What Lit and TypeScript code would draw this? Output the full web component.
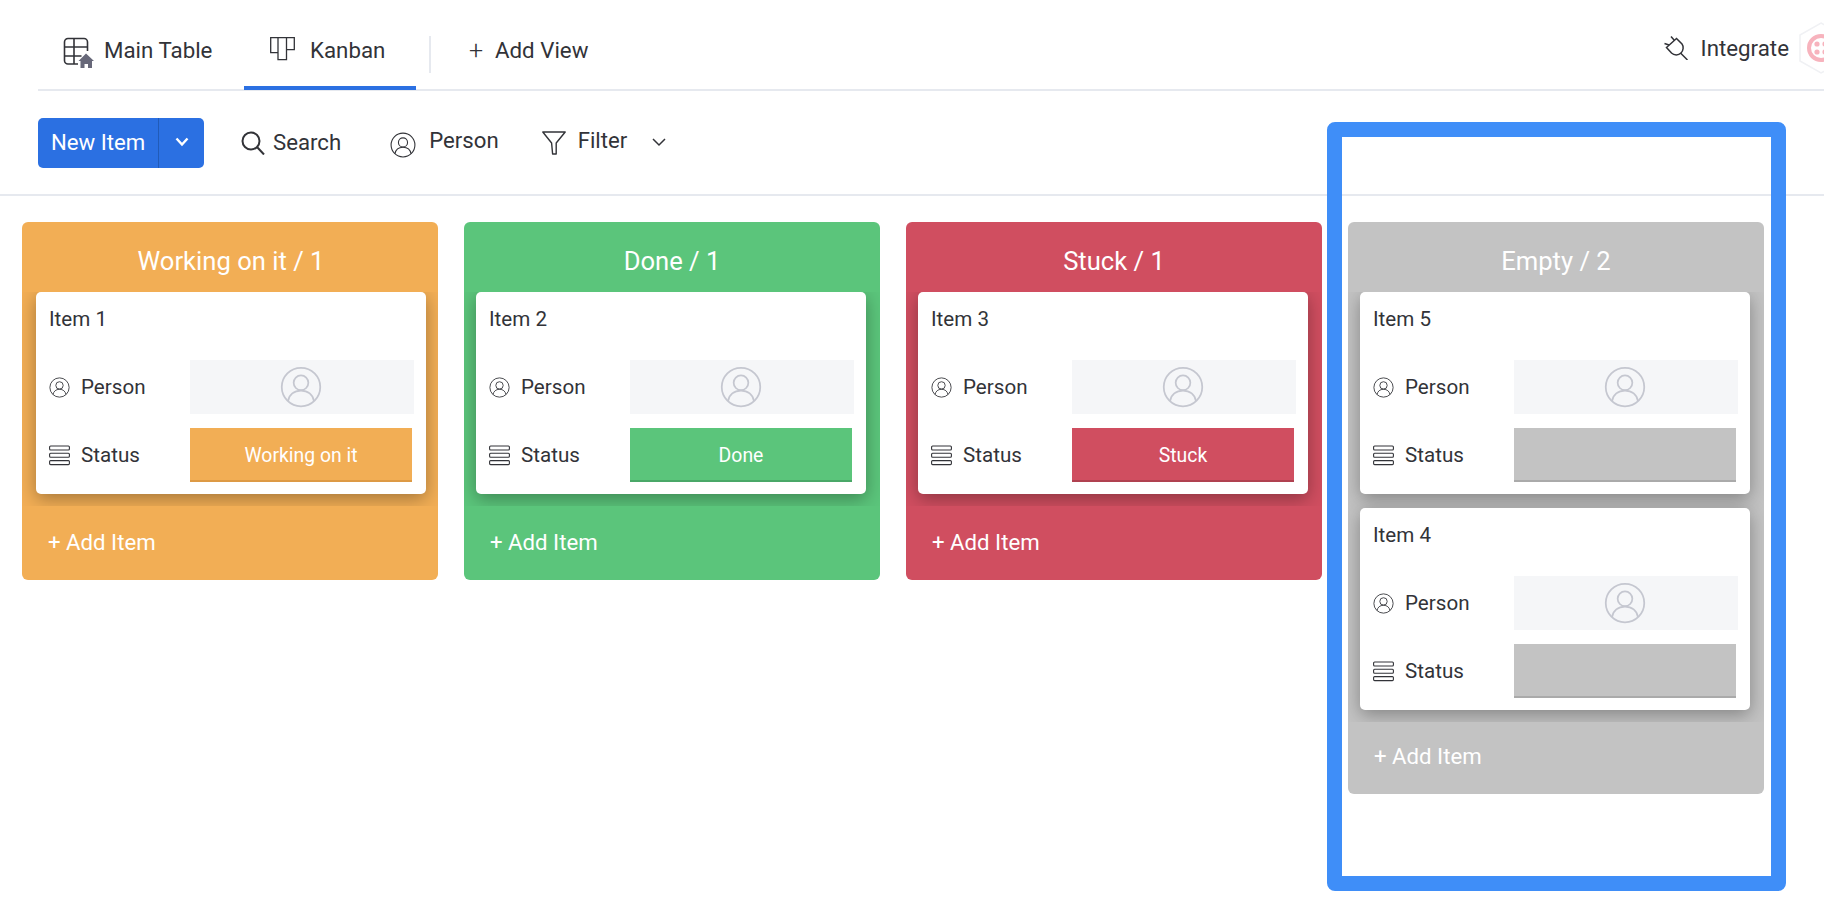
import { LitElement, html, css } from "lit";
import { customElement } from "lit/decorators.js";

const personIcon = (cls: string) => html`<svg class=${cls} viewBox="0 0 24 24" fill="none" stroke="currentColor" stroke-width="1">
  <circle cx="12" cy="12" r="11"/><circle cx="12" cy="9.6" r="4.2"/>
  <path d="M4.6 20c.6-3.6 3.4-6 7.4-6s6.8 2.4 7.4 6"/></svg>`;

const statusIcon = html`<svg class="ic" viewBox="0 0 21 21" fill="none" stroke="currentColor" stroke-width="1.1">
  <rect x=".6" y="1" width="19.8" height="4" rx="1"/><rect x="0.6" y="8.2" width="19.8" height="4" rx="1"/><rect x="0.6" y="15.6" width="19.8" height="4" rx="1"/></svg>`;

const columns = [
  { title: "Working on it / 1", color: "#f2ae55", dark: "#dd9a45", cls: "first", items: [{ name: "Item 1", status: "Working on it" }] },
  { title: "Done / 1", color: "#5bc57b", dark: "#4aa868", cls: "", items: [{ name: "Item 2", status: "Done" }] },
  { title: "Stuck / 1", color: "#d04e60", dark: "#b04150", cls: "", items: [{ name: "Item 3", status: "Stuck" }] },
  { title: "Empty / 2", color: "#c3c3c3", dark: "#aaaaaa", cls: "last", items: [{ name: "Item 5", status: "" }, { name: "Item 4", status: "" }] },
];

@customElement("app-root")
export class AppRoot extends LitElement {
  static styles = css`
    :host { display: block; position: relative; width: 1824px; height: 908px; overflow: hidden; background: #fff;
      font-family: Roboto, "Liberation Sans", sans-serif; color: #323338; }
    .tabs { display: flex; align-items: flex-start; height: 89px; margin-left: 38px; border-bottom: 2px solid #e6e9ef; }
    .tab { display: flex; align-items: center; font-size: 22.3px; padding-top: 10px; box-sizing: border-box; height: 90px; }
    .main { margin-left: 25px; width: 181px; gap: 10px; }
    .main svg { margin-top: 5px; }
    .kanban { width: 172px; padding-left: 26px; padding-top: 14px; gap: 15px; border-bottom: 4px solid #2b70e2; }
    .kanban svg { margin-top: -3px; }
    .sep { width: 2px; height: 37px; background: #e6e9ef; margin: 36px 0 0 13px; }
    .add { margin-left: 38px; gap: 12px; }
    .plus { font-size: 25px; font-weight: 300; width: 14px; display: flex; justify-content: center; line-height: 1; }
    .integrate { margin-left: auto; gap: 13px; padding-top: 6px; }
    .hex { margin-left: -3px; width: 44px; display: flex; align-items: center; margin-right: -19px; }
    .toolbar { display: flex; align-items: center; height: 105px; padding: 1px 0 0 38px; border-bottom: 2px solid #e6e9ef; box-sizing: border-box; font-size: 22.2px; }
    .btn { display: flex; align-items: stretch; height: 50px; width: 166px; background: #2b70e2; color: #fff; border-radius: 5px; }
    .btn-text { border-right: 1px solid #215bb8; display: flex; align-items: center; padding: 0 0 2px 13px; width: 107px; }
    .btn-arrow { flex: 1; display: flex; align-items: center; justify-content: center; padding-bottom: 2px; }
    .search { display: flex; align-items: center; gap: 8px; margin-left: 37px; }
    .search span { margin-top: -2px; }
    .person { display: flex; align-items: center; gap: 13px; margin-left: 49px; }
    .person span { margin-top: -6px; }
    .person svg { width: 26px; height: 26px; margin-top: 3px; }
    .filter { display: flex; align-items: center; gap: 12px; margin-left: 43px; }
    .filter span { margin-top: -6px; }
    .chev { margin-left: 13px; margin-top: -2px; }
    .board { display: flex; align-items: flex-start; gap: 26px; padding: 26px 0 0 22px; }
    .col { width: 416px; border-radius: 6px; color: #fff; padding: 0 12px; box-sizing: border-box; }
    .col.first { padding-left: 14px; }
    .col-title { height: 70px; display: flex; align-items: center; justify-content: center; font-size: 25.6px; padding-top: 8px; box-sizing: border-box; }
    .cards { display: flex; flex-direction: column; gap: 14px; margin: 0 -12px; padding: 0 12px 12px; overflow: hidden; }
    .col.first .cards { margin-left: -14px; padding-left: 14px; }
    .card { flex: none; width: 390px; height: 202px; background: #fff; color: #323338; border-radius: 5px; box-shadow: 0 5px 18px rgba(0,0,0,.32); padding: 15px 12px 12px 13px; box-sizing: border-box; font-size: 20.6px; display: flex; flex-direction: column; }
    .name { height: 24px; line-height: 24px; margin-bottom: 29px; }
    .row { display: grid; grid-template-columns: 141px 1fr; align-items: center; height: 54px; }
    .row + .row { margin-top: 14px; }
    .label { display: flex; align-items: center; gap: 11px; }
    .ic { width: 21px; height: 21px; flex: none; color: #323338; }
    .pbox { height: 54px; background: #f5f6f8; display: flex; align-items: center; justify-content: center; color: #c5c7d0; }
    .pbig { width: 42px; height: 42px; margin-right: 2px; }
    .sbox { height: 54px; width: 222px; box-sizing: border-box; color: #fff; display: flex; align-items: center; justify-content: center; border-bottom: 2px solid; padding-top: 3px; font-size: 19.4px; }
    .add-item { height: 74px; display: flex; align-items: center; font-size: 22.2px; padding: 0 0 2px 14px; box-sizing: border-box; }
    .col.first .add-item { margin-left: -2px; }
    .col.last .add-item { height: 72px; padding-bottom: 4px; }
    .frame { position: absolute; left: 1327px; top: 122px; width: 459px; height: 769px; box-sizing: border-box; border: 15px solid #3f8ef8; border-radius: 8px; pointer-events: none; }
  `;

  renderCol(c: any) {
    return html`<section class="col ${c.cls}" style="background:${c.color}">
      <div class="col-title">${c.title}</div>
      <div class="cards">
        ${c.items.map((it: any) => html`<div class="card">
          <div class="name">${it.name}</div>
          <div class="row"><div class="label">${personIcon("ic")}<span>Person</span></div>
            <div class="pbox">${personIcon("pbig")}</div></div>
          <div class="row"><div class="label">${statusIcon}<span>Status</span></div>
            <div class="sbox" style="background:${c.color};border-color:${c.dark}">${it.status}</div></div>
        </div>`)}
      </div>
      <div class="add-item">+ Add Item</div>
    </section>`;
  }

  render() {
    return html`
      <div class="tabs">
        <div class="tab main">
          <svg width="31" height="31" viewBox="0 0 31 31" fill="none" stroke="#323338" stroke-width="1.6">
            <path d="M15 27H5a3.5 3.5 0 0 1-3.5-3.5V5A3.5 3.5 0 0 1 5 1.5h16A3.5 3.5 0 0 1 24.5 5v9"/>
            <path d="M1.5 10h23M1.5 19h17M11 1.5V27"/>
            <path d="M23 16.5l8 7.500h-2v7h-4v-4h-3.500v4h-4v-7h-2z" fill="#676879" stroke="none"/>
          </svg>
          <span>Main Table</span>
        </div>
        <div class="tab kanban">
          <svg width="25" height="24" viewBox="0 0 25 24" fill="none" stroke="#323338" stroke-width="1.3">
            <path d="M.7 .7h7.300v15H.7zM8 .7h8.500v22H8zM16.500 .7h7.800v12h-7.800z"/>
          </svg>
          <span>Kanban</span>
        </div>
        <div class="sep"></div>
        <div class="tab add"><span class="plus">+</span><span>Add View</span></div>
        <div class="tab integrate">
          <svg width="24" height="24" viewBox="0 0 24 24" fill="none" stroke="#323338" stroke-width="1.5">
            <path d="M12.500 2.500L2.500 11.500L7.500 17C10 19.500 14.500 19.500 17 17C19.500 14.500 19.800 10.500 18 8Z"/>
            <path d="M10.500 4.500L7 0.500M5 9L0.500 7.500M16.500 17L23.500 24"/>
          </svg>
          <span>Integrate</span>
          <div class="hex">
            <svg width="44" height="52" viewBox="0 0 44 52">
              <path d="M22 1l21 12v26L22 51 1 39V13z" fill="#fff" stroke="#f0f1f4" stroke-width="1.5"/>
              <circle cx="22" cy="26" r="12" fill="none" stroke="#f7b3bd" stroke-width="4"/>
              <circle cx="18" cy="22" r="2.600" fill="#f7b3bd"/><circle cx="26" cy="22" r="2.600" fill="#f7b3bd"/>
              <circle cx="18" cy="30" r="2.600" fill="#f7b3bd"/><circle cx="26" cy="30" r="2.600" fill="#f7b3bd"/>
            </svg>
          </div>
        </div>
      </div>
      <div class="toolbar">
        <div class="btn"><div class="btn-text">New Item</div>
          <div class="btn-arrow"><svg width="14" height="10" viewBox="0 0 14 10" fill="none" stroke="#fff" stroke-width="2.4"><path d="M1.500 1.500L7 7.500l5.500-6"/></svg></div></div>
        <div class="search">
          <svg width="24" height="24" viewBox="0 0 24 24" fill="none" stroke="#323338" stroke-width="2"><circle cx="10" cy="10" r="8.500"/><path d="M16 16l7 7.500"/></svg>
          <span>Search</span></div>
        <div class="person">${personIcon("")}<span>Person</span></div>
        <div class="filter">
          <svg width="24" height="24" viewBox="0 0 24 24" fill="none" stroke="#323338" stroke-width="1.4" stroke-linejoin="round"><path d="M.8 1h22.400l-9 11v11h-3.600L9.600 12z"/></svg>
          <span>Filter</span>
          <svg class="chev" width="14" height="9" viewBox="0 0 14 9" fill="none" stroke="#323338" stroke-width="1.5"><path d="M1 1l6 6 6-6"/></svg>
        </div>
      </div>
      <div class="board">${columns.map((c) => this.renderCol(c))}</div>
      <div class="frame"></div>
    `;
  }
}
